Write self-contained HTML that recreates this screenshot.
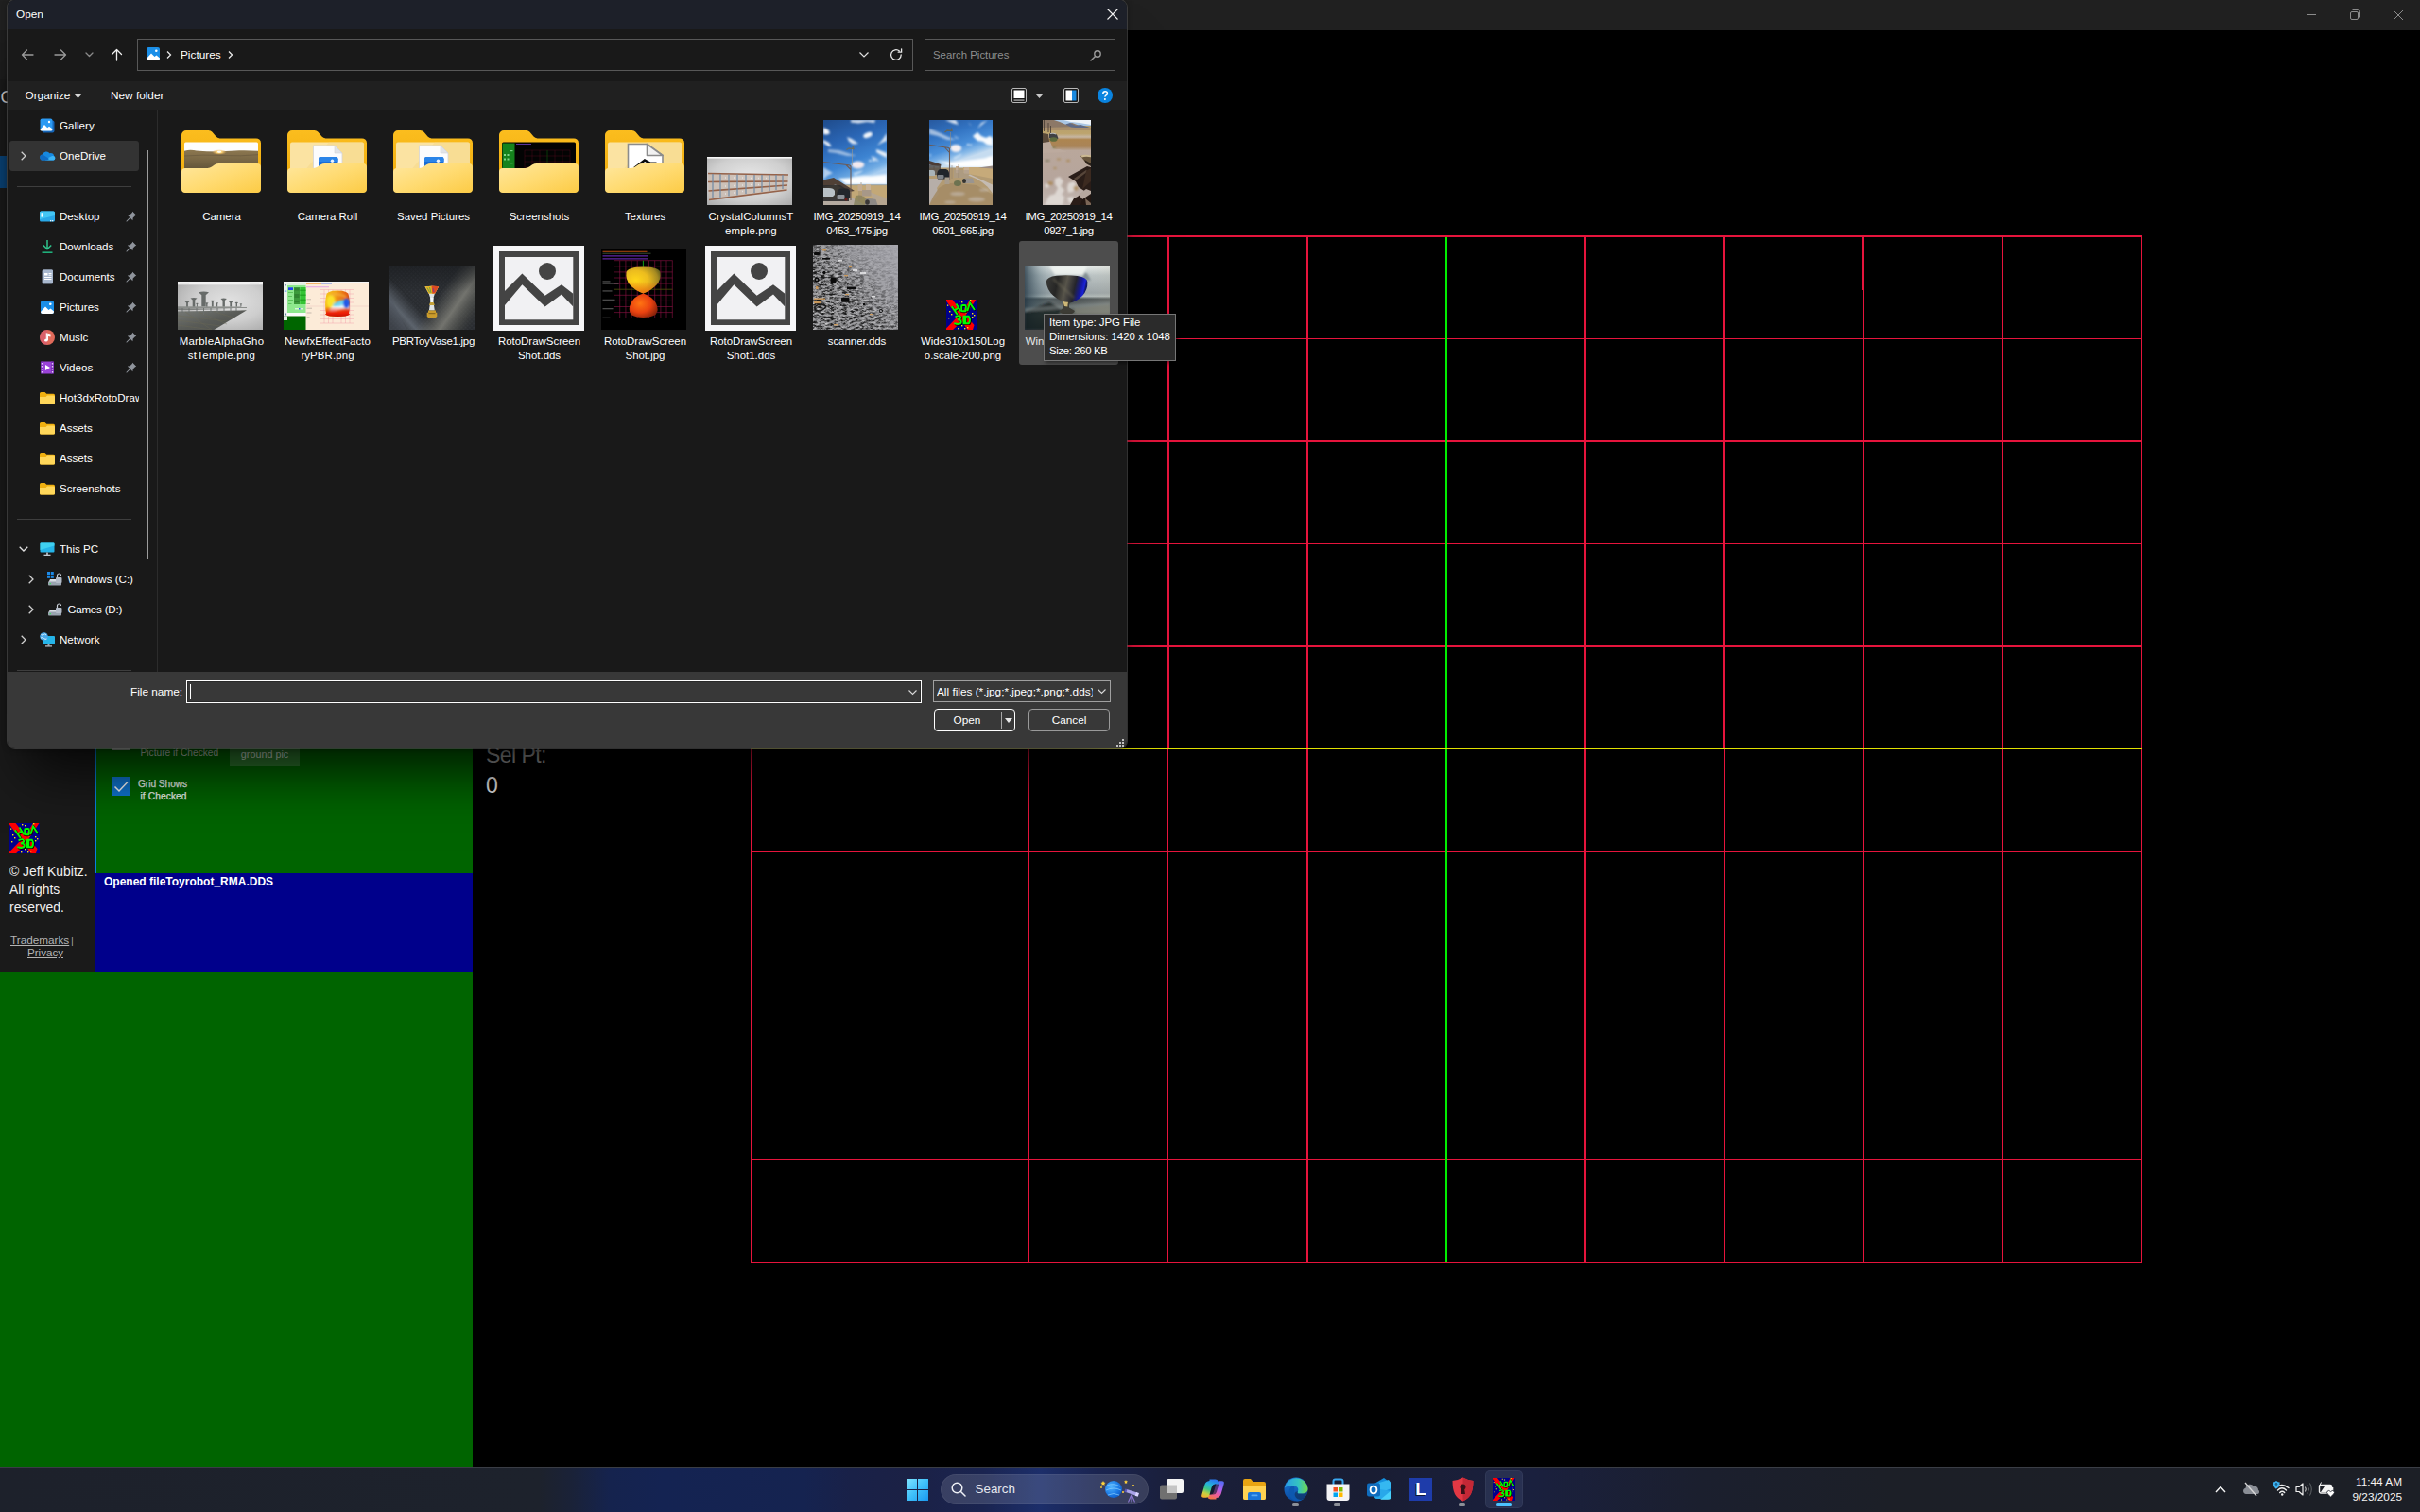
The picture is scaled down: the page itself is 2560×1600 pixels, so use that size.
<!DOCTYPE html>
<html lang="en">
<head>
<meta charset="utf-8">
<title>Open</title>
<style>
*{box-sizing:border-box;margin:0;padding:0}
html,body{width:2560px;height:1600px;overflow:hidden;background:#000;font-family:"Liberation Sans",sans-serif;color:#fff}
.a{position:absolute}
.t{position:absolute;white-space:nowrap;font-size:11.5px;line-height:16px;color:#fff}
svg{position:absolute;overflow:visible}
/* app layer */
#apptitle{left:0;top:0;width:2560px;height:32px;background:#202020}
#sidebar{left:0;top:32px;width:100px;height:997px;background:#1a1a1a}
#sidetop{left:0;top:32px;width:100px;height:52px;background:#1d1d1d}
#selnav{left:0;top:165px;width:7px;height:34px;background:#0a4377}
#green{left:100px;top:32px;width:400px;height:892px;background:#006400}
#greenline{left:100px;top:32px;width:2px;height:892px;background:#0a7fe0}
#bluebar{left:100px;top:924px;width:400px;height:105px;background:#00008b}
#green2{left:0;top:1029px;width:500px;height:523px;background:#006400}
/* dialog */
#dlg{left:8px;top:0;width:1184px;height:792px;background:#191919;border-radius:8px;box-shadow:0 0 0 1px rgba(90,90,90,.55),0 45px 56px -20px rgba(0,0,0,.76),0 1px 6px rgba(0,0,0,.35);overflow:hidden}
#dtitle{left:0;top:0;width:1184px;height:31px;background:#1d2029}
#dtool{left:0;top:86px;width:1184px;height:30px;background:#202020}
#dbottom{left:0;top:711px;width:1184px;height:81px;background:#383838}
.box{position:absolute;border:1px solid #585858;background:#191919}
.nav{position:absolute;white-space:nowrap;font-size:11.6px;line-height:16px;color:#fff;height:16px}
.dg{letter-spacing:-.4px}
.lbl{position:absolute;width:112px;text-align:center;font-size:11.45px;line-height:14.600px;color:#fff;white-space:nowrap}
/* taskbar */
#taskbar{left:0;top:1552px;width:2560px;height:48px;background:linear-gradient(90deg,#1d212b 0,#1d222c 570px,#1a2238 605px,#15234e 645px,#142352 700px,#152350 850px,#192148 900px,#1b2145 960px,#1a2450 1040px,#1c2e6a 1100px,#1a2450 1160px,#1a1f3a 1240px,#191d33 1450px,#1a203e 1620px,#1b1f2e 1800px,#1c1f27 2000px,#1c1f26 2560px);border-top:1px solid #3a3d45}
</style>
</head>
<body>
<!-- ================= APP LAYER ================= -->
<div class="a" id="apptitle"></div>
<svg style="left:2430px;top:0" width="130" height="32" viewBox="0 0 130 32" fill="none" stroke="#8b8b8b" stroke-width="1">
  <path d="M10 15.5h10"/>
  <rect x="56.500" y="12.500" width="8" height="8" rx="1.500"/><path d="M58.500 10.500h6q2 0 2 2v6"/>
  <path d="M102 11l10 10M112 11l-10 10"/>
</svg>
<div class="a" id="sidebar"></div>
<div class="a" id="sidetop"></div>
<div class="a" id="selnav"></div>
<div class="t" style="left:.5px;top:93.200px;font-size:18px;line-height:20px;color:#d0d0d0">C</div>
<div class="a" id="green"></div>
<div class="a" id="greenline"></div>
<div class="a" id="bluebar"></div>
<div class="a" id="green2"></div>

<!-- green panel controls partly visible under the dialog -->
<div class="a" style="left:118px;top:774px;width:20px;height:20px;border:2px solid #a8b8a8"></div>
<div class="t" style="left:148.500px;top:789px;font-size:10.2px;line-height:15px;color:#c4d0c4">Picture if Checked</div>
<div class="a" style="left:243px;top:782px;width:74px;height:29px;background:#2f7a2f"></div>
<div class="t" style="left:243px;top:791px;width:74px;text-align:center;font-size:10.8px;line-height:15px;color:#d6e2d6">ground pic</div>
<div class="a" style="left:118px;top:822px;width:20px;height:20px;background:#0f76d2"></div>
<svg style="left:118px;top:822px" width="20" height="20" viewBox="0 0 20 20" fill="none" stroke="#fff" stroke-width="1.500"><path d="M3.500 10.500l4.500 4.500l9-9.500"/></svg>
<div class="t" style="left:146px;top:822px;font-size:10.2px;line-height:15px;color:#eef4ee;-webkit-text-stroke:.25px #eef4ee;letter-spacing:-.05px">Grid Shows</div>
<div class="t" style="left:148.500px;top:835px;font-size:10.2px;line-height:15px;color:#eef4ee;-webkit-text-stroke:.25px #eef4ee;letter-spacing:.1px">if Checked</div>
<div class="t" style="left:110px;top:925px;font-size:12px;line-height:16px;font-weight:bold">Opened fileToyrobot_RMA.DDS</div>

<!-- sidebar bottom -->
<svg style="left:10px;top:871px" width="32" height="32" viewBox="0 0 32 32"><use href="#hot3d"/></svg>
<div class="t" style="left:10px;top:913px;font-size:13.9px;line-height:19px;color:#f0f0f0;white-space:normal;width:92px">© Jeff Kubitz. All rights reserved.</div>
<div class="t" style="left:11px;top:988px;font-size:11.75px;line-height:13px;color:#b4b4b4"><span style="text-decoration:underline">Trademarks</span><span style="font-size:9px;padding-left:2px">|</span></div>
<div class="t" style="left:29px;top:1001px;font-size:11.6px;line-height:13px;color:#b4b4b4;text-decoration:underline">Privacy</div>

<!-- Sel Pt -->
<div class="t" style="left:514px;top:784px;font-size:23px;line-height:30px;color:#9a9a9a;letter-spacing:-.55px">Sel Pt:</div>
<div class="t" style="left:514px;top:816px;font-size:23px;line-height:30px;color:#e6e6e6">0</div>

<!-- GRID -->
<svg id="grid" style="left:0;top:0" width="2560" height="1600" viewBox="0 0 2560 1600" fill="none" shape-rendering="crispEdges">
  <g stroke="#e6143c" stroke-width="1">
    <path d="M794.500 792v543.500M941.500 792v543.500M1088.500 792v543.500M1235.500 792v543.500M1971.500 306v1029.500M2118.500 250v1085.500M2265.500 250v1085.500M1824.500 792v543.500"/>
    <path d="M794 358.500h1472M794 575.500h1472M794 1009.500h1472M794 1118.500h1472M794 1226.500h1472M794 1335.500h1472"/>
  </g>
  <g stroke="#e6143c" stroke-width="2">
    <path d="M1236 250v542M1383 250v1085M1677 250v1085M1824 250v542M1971 250v57"/>
    <path d="M794 250h1472M794 467h1472M794 684h1472M794 901h1472"/>
  </g>
  <path d="M1530 251v1084" stroke="#00ee00" stroke-width="2"/>
  <path d="M794 792.500h1472" stroke="#e0e000" stroke-width="1"/>
</svg>

<!-- ================= DIALOG ================= -->
<div class="a" id="dlg">
  <div class="a" id="dtitle"></div>
  <div class="a" id="dtool"></div>
  <div class="a" id="dbottom"></div>
</div>
<!-- title -->
<div class="t" style="left:17px;top:7px;font-size:11.8px;line-height:16px">Open</div>
<svg style="left:1171px;top:9px" width="12" height="12" viewBox="0 0 12 12" fill="none" stroke="#f2f2f2" stroke-width="1.100"><path d="M.5.5l11 11M11.500.5l-11 11"/></svg>
<!-- nav arrows -->
<svg style="left:20px;top:49px" width="120" height="18" viewBox="0 0 120 18" fill="none" stroke-width="1.300" stroke-linecap="round" stroke-linejoin="round">
  <path d="M15 9H3.500M8.500 4L3.500 9l5 5" stroke="#9a9a9a"/>
  <path d="M38 9h11.500M44.500 4l5 5-5 5" stroke="#9a9a9a"/>
  <path d="M71 7l3.500 3.500L78 7" stroke="#8a8a8a"/>
  <path d="M103.500 15V3.500M98.500 8.500l5-5 5 5" stroke="#f0f0f0"/>
</svg>
<!-- address box -->
<div class="box" style="left:145px;top:41px;width:821px;height:34px"></div>
<svg style="left:155px;top:50px" width="14" height="14" viewBox="0 0 14 14"><use href="#picico"/></svg>
<svg style="left:176px;top:54px" width="6" height="8" viewBox="0 0 6 8" fill="none" stroke="#e8e8e8" stroke-width="1.300"><path d="M1 .5L4.500 4 1 7.500"/></svg>
<div class="t" style="left:191px;top:50px;font-size:11.8px;line-height:16px">Pictures</div>
<svg style="left:241px;top:54px" width="6" height="8" viewBox="0 0 6 8" fill="none" stroke="#e8e8e8" stroke-width="1.300"><path d="M1 .5L4.500 4 1 7.500"/></svg>
<svg style="left:909px;top:55px" width="10" height="6" viewBox="0 0 10 6" fill="none" stroke="#e0e0e0" stroke-width="1.200"><path d="M.5.5L5 5 9.500.5"/></svg>
<svg style="left:941px;top:51px" width="14" height="14" viewBox="0 0 14 14" fill="none" stroke="#e8e8e8" stroke-width="1.300" stroke-linecap="round"><path d="M12.200 7a5.300 5.300 0 1 1-1.800-4"/><path d="M12.600 .8v3.400H9.200"/></svg>
<!-- search box -->
<div class="box" style="left:978px;top:41px;width:202px;height:34px"></div>
<div class="t" style="left:987px;top:50px;font-size:11.4px;line-height:16px;color:#8e8e8e">Search Pictures</div>
<svg style="left:1153px;top:52px" width="13" height="13" viewBox="0 0 13 13" fill="none" stroke="#9a9a9a" stroke-width="1.400" stroke-linecap="round"><circle cx="8" cy="5" r="3.200"/><path d="M5.600 7.400L1 12"/></svg>
<!-- toolbar -->
<div class="t" style="left:26.500px;top:93px;font-size:11.8px;line-height:16px">Organize</div>
<svg style="left:78px;top:99px" width="9" height="5" viewBox="0 0 9 5"><path d="M0 0h9L4.500 5z" fill="#d8d8d8"/></svg>
<div class="t" style="left:117px;top:93px;font-size:11.8px;line-height:16px">New folder</div>
<svg style="left:1070px;top:93px" width="16" height="16" viewBox="0 0 16 16"><rect x=".5" y=".5" width="15" height="15" rx="1.500" fill="#1a1a1a" stroke="#b8b8b8"/><rect x="2.500" y="2.500" width="11" height="8.500" fill="#fff"/><rect x="2.500" y="12.500" width="11" height="1.200" fill="#b8b8b8"/></svg>
<svg style="left:1095px;top:99px" width="9" height="5" viewBox="0 0 9 5"><path d="M0 0h9L4.500 5z" fill="#c8c8c8"/></svg>
<svg style="left:1125px;top:93px" width="16" height="16" viewBox="0 0 16 16"><rect x=".5" y=".5" width="15" height="15" rx="1.500" fill="#1a1a1a" stroke="#b8b8b8"/><rect x="2.500" y="2.500" width="6.500" height="11" fill="#fff"/><rect x="9" y="2.500" width="4.500" height="11" fill="#1a8ae0"/></svg>
<svg style="left:1161px;top:93px" width="16" height="16" viewBox="0 0 16 16"><circle cx="8" cy="8" r="8" fill="#0a84e0"/><path d="M5.800 6.200q0-2.400 2.300-2.400t2.300 2.100q0 1.300-1.300 2t-1.100 1.800" fill="none" stroke="#fff" stroke-width="1.500"/><circle cx="7.900" cy="12" r="1" fill="#fff"/></svg>
<!-- bottom panel -->
<div class="t" style="left:138px;top:724px;font-size:11.8px;line-height:16px">File name:</div>
<div class="a" style="left:197px;top:720px;width:778px;height:24px;border:1px solid #fff;background:#383838;box-shadow:inset 0 0 0 1px #2a2a2a"></div>
<div class="a" style="left:201px;top:724px;width:1px;height:16px;background:#fff"></div>
<svg style="left:961px;top:730px" width="9" height="5" viewBox="0 0 9 5" fill="none" stroke="#d8d8d8" stroke-width="1.100"><path d="M.5.5l4 4 4-4"/></svg>
<div class="a" style="left:987px;top:720px;width:188px;height:23px;border:1px solid #a0a0a0;background:#383838"></div>
<div class="t" style="left:991px;top:723.500px;font-size:11.8px;line-height:16px;width:165px;overflow:hidden">All files (*.jpg;*.jpeg;*.png;*.dds)</div>
<svg style="left:1161px;top:729px" width="9" height="5" viewBox="0 0 9 5" fill="none" stroke="#d8d8d8" stroke-width="1.100"><path d="M.5.5l4 4 4-4"/></svg>
<div class="a" style="left:988px;top:750px;width:86px;height:24px;border:1.500px solid #fff;border-radius:4px;background:#383838"></div>
<div class="t" style="left:988px;top:754px;width:70px;text-align:center;font-size:11.8px;line-height:16px">Open</div>
<div class="a" style="left:1059px;top:753px;width:1px;height:18px;background:#a8a8a8"></div>
<svg style="left:1063px;top:760px" width="8" height="5" viewBox="0 0 8 5"><path d="M0 0h8L4 5z" fill="#e8e8e8"/></svg>
<div class="a" style="left:1088px;top:750px;width:86px;height:24px;border:1px solid #9a9a9a;border-radius:4px;background:#383838"></div>
<div class="t" style="left:1088px;top:754px;width:86px;text-align:center;font-size:11.8px;line-height:16px">Cancel</div>
<svg style="left:1181px;top:782px" width="9" height="9" viewBox="0 0 9 9" fill="#c0c0c0"><rect x="6" y="0" width="2" height="2"/><rect x="3" y="3" width="2" height="2"/><rect x="6" y="3" width="2" height="2"/><rect x="0" y="6" width="2" height="2"/><rect x="3" y="6" width="2" height="2"/><rect x="6" y="6" width="2" height="2"/></svg>

<!-- nav pane -->
<div class="a" style="left:166px;top:116px;width:1px;height:595px;background:#2c2c2c"></div>
<div class="a" style="left:10px;top:149px;width:137px;height:32px;background:#333333;border-radius:3px"></div>
<div class="a" style="left:18px;top:197px;width:121px;height:1px;background:#3e3e3e"></div>
<div class="a" style="left:18px;top:549px;width:121px;height:1px;background:#3e3e3e"></div>
<div class="a" style="left:18px;top:709px;width:121px;height:1px;background:#3e3e3e"></div>
<div class="a" style="left:155px;top:159px;width:2px;height:433px;background:#9c9c9c"></div>
<svg style="left:42px;top:125px" width="16" height="16" viewBox="0 0 16 16"><use href="#i-gallery"/></svg>
<div class="nav" style="left:63.0px;top:125px">Gallery</div>
<svg style="left:42px;top:157px" width="16" height="16" viewBox="0 0 16 16"><use href="#i-onedrive"/></svg>
<div class="nav" style="left:63.0px;top:157px">OneDrive</div>
<svg style="left:42px;top:221px" width="16" height="16" viewBox="0 0 16 16"><use href="#i-desktop"/></svg>
<div class="nav" style="left:63.0px;top:221px">Desktop</div>
<svg style="left:133px;top:223px" width="12" height="12" viewBox="0 0 12 12"><use href="#i-pin"/></svg>
<svg style="left:42px;top:253px" width="16" height="16" viewBox="0 0 16 16"><use href="#i-downloads"/></svg>
<div class="nav" style="left:63.0px;top:253px">Downloads</div>
<svg style="left:133px;top:255px" width="12" height="12" viewBox="0 0 12 12"><use href="#i-pin"/></svg>
<svg style="left:42px;top:285px" width="16" height="16" viewBox="0 0 16 16"><use href="#i-documents"/></svg>
<div class="nav" style="left:63.0px;top:285px">Documents</div>
<svg style="left:133px;top:287px" width="12" height="12" viewBox="0 0 12 12"><use href="#i-pin"/></svg>
<svg style="left:42px;top:317px" width="16" height="16" viewBox="0 0 16 16"><use href="#i-pictures"/></svg>
<div class="nav" style="left:63.0px;top:317px">Pictures</div>
<svg style="left:133px;top:319px" width="12" height="12" viewBox="0 0 12 12"><use href="#i-pin"/></svg>
<svg style="left:42px;top:349px" width="16" height="16" viewBox="0 0 16 16"><use href="#i-music"/></svg>
<div class="nav" style="left:63.0px;top:349px">Music</div>
<svg style="left:133px;top:351px" width="12" height="12" viewBox="0 0 12 12"><use href="#i-pin"/></svg>
<svg style="left:42px;top:381px" width="16" height="16" viewBox="0 0 16 16"><use href="#i-videos"/></svg>
<div class="nav" style="left:63.0px;top:381px">Videos</div>
<svg style="left:133px;top:383px" width="12" height="12" viewBox="0 0 12 12"><use href="#i-pin"/></svg>
<svg style="left:42px;top:413px" width="16" height="16" viewBox="0 0 16 16"><use href="#i-sfolder"/></svg>
<div class="nav" style="left:63.0px;top:413px;width:84px;overflow:hidden">Hot3dxRotoDraw</div>
<svg style="left:42px;top:445px" width="16" height="16" viewBox="0 0 16 16"><use href="#i-sfolder"/></svg>
<div class="nav" style="left:63.0px;top:445px">Assets</div>
<svg style="left:42px;top:477px" width="16" height="16" viewBox="0 0 16 16"><use href="#i-sfolder"/></svg>
<div class="nav" style="left:63.0px;top:477px">Assets</div>
<svg style="left:42px;top:509px" width="16" height="16" viewBox="0 0 16 16"><use href="#i-sfolder"/></svg>
<div class="nav" style="left:63.0px;top:509px">Screenshots</div>
<svg style="left:42px;top:573px" width="16" height="16" viewBox="0 0 16 16"><use href="#i-thispc"/></svg>
<div class="nav" style="left:63.0px;top:573px">This PC</div>
<svg style="left:50px;top:605px" width="16" height="16" viewBox="0 0 16 16"><use href="#i-drivec"/></svg>
<div class="nav" style="left:71.4px;top:605px">Windows (C:)</div>
<svg style="left:50px;top:637px" width="16" height="16" viewBox="0 0 16 16"><use href="#i-drived"/></svg>
<div class="nav" style="left:71.4px;top:637px;letter-spacing:-.22px">Games (D:)</div>
<svg style="left:42px;top:669px" width="16" height="16" viewBox="0 0 16 16"><use href="#i-network"/></svg>
<div class="nav" style="left:63.0px;top:669px">Network</div>
<svg style="left:21.5px;top:160px" width="6" height="10" viewBox="0 0 6 10" fill="none" stroke="#d0d0d0" stroke-width="1.300"><path d="M.7.7L5 5 .7 9.300"/></svg>
<svg style="left:19.5px;top:578px" width="10" height="6" viewBox="0 0 10 6" fill="none" stroke="#e0e0e0" stroke-width="1.300"><path d="M.7.7L5 5 9.300.7"/></svg>
<svg style="left:29.5px;top:608px" width="6" height="10" viewBox="0 0 6 10" fill="none" stroke="#d0d0d0" stroke-width="1.300"><path d="M.7.7L5 5 .7 9.300"/></svg>
<svg style="left:29.5px;top:640px" width="6" height="10" viewBox="0 0 6 10" fill="none" stroke="#d0d0d0" stroke-width="1.300"><path d="M.7.7L5 5 .7 9.300"/></svg>
<svg style="left:21.5px;top:672px" width="6" height="10" viewBox="0 0 6 10" fill="none" stroke="#d0d0d0" stroke-width="1.300"><path d="M.7.7L5 5 .7 9.300"/></svg>

<!-- ===== file items row 1 ===== -->
<!-- Camera -->
<svg style="left:192px;top:138px" width="84" height="66" viewBox="0 0 84 66">
  <use href="#fback"/>
  <defs><linearGradient id="cml" x1="0" y1="0" x2="0" y2="1"><stop offset="0" stop-color="#8d7850"/><stop offset=".5" stop-color="#7a6846"/><stop offset="1" stop-color="#64563a"/></linearGradient><radialGradient id="cms"><stop offset="0" stop-color="#fffbe6"/><stop offset=".35" stop-color="#ffd77a"/><stop offset="1" stop-color="#e2a24a" stop-opacity="0"/></radialGradient></defs>
  <rect x="3" y="12.500" width="78" height="28" rx="1.500" fill="#fdfdfd"/>
  <path d="M3 21.800q5-1.800 10-.8t14 1.200l14 .3q12-.8 20-1.200t20 .5V40.500H3z" fill="url(#cml)"/>
  <ellipse cx="40" cy="23" rx="8" ry="2.800" fill="url(#cms)"/><ellipse cx="40" cy="22.600" rx="2.200" ry="1.100" fill="#fffdf0"/>
  <path d="M3 27q20-1.500 40-.5t38-.8" stroke="#5e5038" stroke-width=".8" fill="none" opacity=".6"/>
  <use href="#ffront"/>
</svg>
<div class="lbl" style="left:178.500px;top:222.200px">Camera</div>
<!-- Camera Roll -->
<svg style="left:304px;top:138px" width="84" height="66" viewBox="0 0 84 66">
  <use href="#fback"/><use href="#fpaper"/><use href="#fdocpic"/><use href="#ffront"/>
</svg>
<div class="lbl" style="left:290.500px;top:222.200px">Camera Roll</div>
<!-- Saved Pictures -->
<svg style="left:416px;top:138px" width="84" height="66" viewBox="0 0 84 66">
  <use href="#fback"/><use href="#fpaper"/><use href="#fdocpic"/><use href="#ffront"/>
</svg>
<div class="lbl" style="left:402.500px;top:222.200px">Saved Pictures</div>
<!-- Screenshots -->
<svg style="left:528px;top:138px" width="84" height="66" viewBox="0 0 84 66">
  <use href="#fback"/>
  <rect x="3" y="12.500" width="78" height="28" rx="1.500" fill="#030303"/>
  <rect x="3.500" y="13.500" width="13" height="27" fill="#15831d"/>
  <g fill="#7fd887"><rect x="5" y="25" width="2" height="2"/><rect x="8.500" y="25" width="2" height="2"/><rect x="5" y="29.500" width="2" height="2"/><rect x="8.500" y="29.500" width="2" height="2"/><rect x="12" y="21" width="2.500" height="1.200"/><rect x="12" y="34" width="2.500" height="1.200"/></g>
  <path d="M18 14.500h16" stroke="#7040c0" stroke-width="1" opacity=".8"/>
  <g stroke="#4a0818" stroke-width=".5"><path d="M27 21h48M27 27h48M27 33h48M27 39h48M27 21v19M35 21v19M43 21v19M59 21v19M67 21v19M75 21v19"/></g><path d="M51 21v19" stroke="#0a5a0a" stroke-width=".6"/>
  <use href="#ffront"/>
</svg>
<div class="lbl" style="left:514.500px;top:222.200px">Screenshots</div>
<!-- Textures -->
<svg style="left:640px;top:138px" width="84" height="66" viewBox="0 0 84 66">
  <use href="#fback"/><use href="#fpaper"/>
  <path d="M24.500 14.500h20l16.500 12V42h-36.500z" fill="#fff" stroke="#8c8c8c" stroke-width="1.600"/>
  <path d="M44.500 14.500v12h16.500z" fill="#f2f2f2" stroke="#8c8c8c" stroke-width="1.600" stroke-linejoin="round"/>
  <path d="M31 40l11-8.500 5.500 3.200h7" fill="none" stroke="#0a0a0a" stroke-width="2.600"/>
  <use href="#ffront"/>
</svg>
<div class="lbl" style="left:626.500px;top:222.200px">Textures</div>
<!-- CrystalColumnsTemple.png -->
<svg style="left:748px;top:166px" width="90" height="51" viewBox="0 0 90 51">
  <defs><radialGradient id="ccg" cx=".5" cy=".45" r=".75"><stop offset="0" stop-color="#e9e9e9"/><stop offset=".6" stop-color="#cfcfcf"/><stop offset="1" stop-color="#aaaaaa"/></radialGradient></defs>
  <rect width="90" height="51" fill="url(#ccg)"/><rect width="90" height="1.600" fill="#f6f6f6"/>
  <path d="M1 17l85 1.500-1 17L2 46z" fill="#c9b9ae" opacity=".75"/>
  <g stroke="#94624a" stroke-width="1.700" fill="none"><path d="M1 17.500l85 1.500M1 26.500l84.500-.5M1.500 36l83.500-6M2 45.500l82.500-10.500"/></g>
  <g stroke="#6f8aa6" stroke-width="1.200"><path d="M6 18v26M14 18v25M23 18.500v23M32 18.500v22M41 19v20M50 19v19M58 19v18M66 19v17M73 19v16M80 19v15"/></g>
  <g stroke="#e8e8ea" stroke-width="1.600" opacity=".8"><path d="M10 22h1M19 22h1M28 22h1M37 22h1M46 22.500h1M54 22.500h1M62 22.500h1M10 31h1M19 31h1M28 30.500h1M37 30h1M46 29.500h1M54 29.500h1M10 40h1M19 39h1M28 38h1M37 36.500h1"/></g>
</svg>
<div class="lbl" style="left:738.500px;top:222.200px;letter-spacing:.15px">CrystalColumnsT<br>emple.png</div>
<!-- IMG_20250919_140453_475.jpg -->
<svg style="left:871px;top:127px;overflow:hidden" width="67" height="90" viewBox="0 0 67 90">
  <defs><linearGradient id="sky1" x1="0" y1="0" x2=".3" y2="1"><stop offset="0" stop-color="#1f4c8c"/><stop offset=".3" stop-color="#2a65b4"/><stop offset=".58" stop-color="#3d84d2"/><stop offset=".74" stop-color="#73ade4"/><stop offset=".8" stop-color="#a8cdf0"/></linearGradient></defs>
  <rect width="67" height="90" fill="url(#sky1)"/>
  <g filter="url(#bl1)" fill="#fff">
    <path d="M29 0h26l-1 3-8-1-9 1.500-8-1z" opacity=".8"/><path d="M52 1l3 7-2-5z" opacity=".6"/>
    <path d="M0 8l5 2 2 4-3 1.500L0 15z" opacity=".95"/><path d="M0 21l6 3 2.500 4-3 0L0 24z" opacity=".9"/>
    <path d="M25 18l5 2 7 5-6 .5-4-3z" opacity=".85"/><ellipse cx="47" cy="16" rx="5" ry="2.600" transform="rotate(-22 47 16)" opacity=".92"/>
    <path d="M67 14l-4 6-6 7 5-3 5-2z" opacity=".8"/><path d="M5 31l12 1 12 4 6 2-10 0-12-3-8-1z" opacity=".5"/>
    <path d="M56 31l6 2 5 2v5l-6-3-5-3z" opacity=".85"/><path d="M51 38l5 2 3 4-4-1-4-3z" opacity=".6"/>
    <rect x="48.500" y="42" width="2" height="2" opacity=".9"/><rect x="52" y="41.500" width="2.200" height="2" opacity=".9"/>
    <ellipse cx="36.500" cy="47.500" rx="6.800" ry="4" fill="#f3e9ee"/><path d="M31 56l11-3-2 2.500-7 3.500z" opacity=".55"/><path d="M0 50l5 3 5 3-6 3-4 4z" opacity=".6"/>
    <path d="M16 62l20-1 31-2v9H24z" opacity=".97"/><path d="M30 60q10-2.500 20-1l17-2v5H30z" opacity=".7"/>
  </g>
  <rect y="68.500" width="67" height="21.500" fill="#c3a877"/><rect y="68" width="67" height="1.200" fill="#8aa0b8" opacity=".6"/>
  <path d="M49 76l18 7v7H56z" fill="#b6a690"/><path d="M0 82h30l14 8H0z" fill="#b4aaa0"/><path d="M34 80q8-2 12 4l4 6H32z" fill="#7d7a52" opacity=".7"/>
  <path d="M0 63.500l11-2.500 22 14-6 1-14-7.500L0 71z" fill="#4f4036"/><path d="M0 69h18l9 6v11H0z" fill="#2f2e2e" opacity=".92"/>
  <path d="M0 72h6q5 0 6 3v4l-2 2H0z" fill="#b9c1c6"/><path d="M14 80q0-6 4-7.500h7q3 .5 3.500 4.500v5.500l-3 1H15z" fill="#23262b"/><rect x="14.500" y="79" width="8" height="5" rx="1" fill="#8d9197"/><circle cx="24" cy="84" r="1.500" fill="#6a1c18"/>
  <path d="M29 48.500V85M0 44.500l27 3.200q2 .3 2 2M24 47.500l5 5" stroke="#6e5c56" stroke-width="1.100" fill="none"/><path d="M30.500 31v17" stroke="#9a9890" stroke-width=".6"/><path d="M24.500 31.500l2.500-1.500 5 .5-1-2.500" stroke="#6b6d60" stroke-width="1.300" fill="none"/>
  <path d="M38 74v12M40 66v18" stroke="#8c7c6c" stroke-width=".6"/><rect x="36.500" y="68" width="4.500" height="7" fill="#c2ab92"/><rect x="45" y="68" width="5" height="6" fill="#c8b298"/><rect x="41" y="74" width="9.500" height="6.500" fill="#a4968a" opacity=".9"/>
  <path d="M44 86q0-3 3.500-3t8 1l2 6H44z" fill="#8e8a86"/><ellipse cx="46.500" cy="87" rx="2.300" ry="2.800" fill="#3a3836"/>
</svg>
<div class="lbl dg" style="left:850.500px;top:222.200px">IMG_20250919_14<br>0453_475.jpg</div>
<!-- IMG_20250919_140501_665.jpg -->
<svg style="left:983px;top:127px;overflow:hidden" width="67" height="90" viewBox="0 0 67 90">
  <defs><linearGradient id="sky2" x1="0" y1="0" x2=".25" y2="1"><stop offset="0" stop-color="#27599f"/><stop offset=".22" stop-color="#3273c2"/><stop offset=".4" stop-color="#4a90da"/><stop offset=".5" stop-color="#8cbce9"/><stop offset=".56" stop-color="#c6dcf0"/></linearGradient></defs>
  <rect width="67" height="90" fill="url(#sky2)"/>
  <g filter="url(#bl1)" fill="#fff">
    <path d="M17 0h11l3 5-6-1.500z" opacity=".8"/><path d="M62 0l-11 9 4-6z" opacity=".75"/><path d="M41 2l4 4-2-1z" opacity=".5"/>
    <path d="M0 9l10 4 10 5 8 3-9 0-10-4-9-2z" opacity=".55"/><path d="M26 16l6 4-4-.5z" opacity=".5"/>
    <path d="M46 17l5-4 4 4 5 2 4-2 3 2v8l-6-1-4-3-6-1z" opacity=".95"/><rect x="40" y="25" width="2" height="1.800" opacity=".85"/><rect x="43" y="25.500" width="1.800" height="1.600" opacity=".8"/>
    <ellipse cx="28.200" cy="30" rx="6" ry="4" fill="#f4f0f2"/><path d="M25 40l10-5-2 3-6 3.500z" opacity=".5"/><path d="M0 36l3 1-3 2z" opacity=".5"/>
    <path d="M8 43l14 2 20-2.500 16-2 9-2.500v12H28z" opacity=".96"/><path d="M62 39l5-.5v4l-5-1z"/>
  </g>
  <rect y="50.500" width="67" height="39.500" fill="#b39b73"/><path d="M36 50h31v12l-20-4-11-2z" fill="#c6aa7a"/><path d="M52 50.500l15-2v3z" fill="#9b8c84"/>
  <path d="M43 57.500l24 11v9q-8-13-26-19z" fill="#c4bbb2"/>
  <path d="M0 62h15l-7 10 2 6-10 12z" fill="#b6aea8"/><path d="M10 72q8-6 20-5l20 2 17 10v11H0q4-10 10-18z" fill="#a48c66" opacity=".9"/>
  <g filter="url(#bl1)" fill="#c9c1ba" opacity=".55"><ellipse cx="30" cy="78" rx="8" ry="2"/><ellipse cx="50" cy="84" rx="9" ry="2.500"/><ellipse cx="22" cy="87" rx="6" ry="1.500"/><ellipse cx="58" cy="74" rx="5" ry="1.500"/></g>
  <path d="M0 43l12.500 4-.5 2.500L0 47.500z" fill="#4c3c36"/><path d="M0 48h12v10H0z" fill="#55504c" opacity=".85"/><path d="M5 49v9M11 49v9" stroke="#5e4e46" stroke-width=".8"/>
  <path d="M0 53h4q2 0 2 2v4H0z" fill="#a9b3b8"/><path d="M8 59q0-6 3.500-7h6q3 .5 3.500 4v5.500l-4 1H9z" fill="#20242a"/><rect x="8.500" y="58" width="7" height="4" rx="1" fill="#7e8288"/>
  <path d="M21.500 29.500V64M0 26.200l19.500 3q2 .3 2 2M16.500 29l5 5.500" stroke="#6b5a55" stroke-width="1.100" fill="none"/><path d="M22.500 13v17" stroke="#8e8c84" stroke-width=".6"/><path d="M16.500 13l2.500-2 5 .5-.5-3" stroke="#63655a" stroke-width="1.300" fill="none"/>
  <rect x="28" y="49" width="3.500" height="7" fill="#c3aa90"/><rect x="37" y="50" width="5" height="6.500" fill="#c7b096"/><rect x="26" y="53" width="16" height="8" fill="#a89a8c" opacity=".55"/><path d="M24 48v14M31 47v14" stroke="#8c7c6c" stroke-width=".5"/>
  <rect x="16.500" y="60.500" width="5" height="7.500" fill="#a89c8c"/><ellipse cx="30" cy="67" rx="4" ry="3" fill="#6d7250"/><path d="M35 64q0-2.500 4-2.500h7l1.500 5.500H36z" fill="#9a9590"/><ellipse cx="37" cy="64.500" rx="2" ry="2.600" fill="#35332f"/>
</svg>
<div class="lbl dg" style="left:962.500px;top:222.200px">IMG_20250919_14<br>0501_665.jpg</div>
<!-- IMG_20250919_140927_1.jpg -->
<svg style="left:1103px;top:127px;overflow:hidden" width="51" height="90" viewBox="0 0 51 90">
  <defs><linearGradient id="gr3" x1="0" y1="0" x2="0" y2="1"><stop offset="0" stop-color="#b19a6a"/><stop offset=".16" stop-color="#bda46e"/><stop offset=".2" stop-color="#c6b6a4"/><stop offset=".23" stop-color="#ad8550"/><stop offset=".31" stop-color="#a98458"/><stop offset=".36" stop-color="#b9a79b"/><stop offset=".7" stop-color="#b6a59c"/><stop offset="1" stop-color="#c3b8b2"/></linearGradient></defs>
  <rect width="51" height="90" fill="url(#gr3)"/>
  <path d="M0 22l8 1 3 7 14 4H0z" fill="#bba99c"/><path d="M0 31h18l8 3-26 1z" fill="#bcaa9e"/>
  <rect x="12" width="39" height="6" fill="#a9c6e4"/><path d="M22 0h29v5l-12-2-9-1z" fill="#eef3f8"/>
  <path d="M0 0h12l6 2 7 3 6-2 8 3 12 2.500V9L30 7.500 0 8z" fill="#8c7867"/><path d="M24 4.500l5-1.500 6 3 5-1 11 3.200v1.300L30 7.600z" fill="#5f6a86"/>
  <path d="M0 8h51v3H0z" fill="#a98f6c"/>
  <path d="M1.500 0v12M3.500 0v11M6 3v10M8.500 6v9" stroke="#4e4238" stroke-width=".9"/>
  <path d="M0 14l6 1 1 8-7 1z" fill="#5a4a3a"/><path d="M7 14.500q4-1.500 8 1l1.500 4-3 1.500-6.500-2z" fill="#3e4044"/><path d="M8 14.500q3-1 6 .5" stroke="#c8ccd0" stroke-width=".9" fill="none"/><ellipse cx="11.500" cy="20.500" rx="4" ry="2.300" fill="#5d6b3e"/>
  <g filter="url(#bl1)"><g fill="#e2dcd8" opacity=".9"><path d="M13 62l5-2 4 5-3 5 4 4-4 7-6-3 3-6-3-4z"/><path d="M27 67l6-2 3 5-4 6-5 1-1-5z"/><path d="M2 68l4-1 1 4-4 1z"/><path d="M7 80l10-3 6 4-2 9H2z"/><path d="M26 82l6-1 2 5-6 2z"/></g>
  <g fill="#a8844e" opacity=".75"><ellipse cx="17" cy="41.500" rx="2.200" ry="1"/><ellipse cx="27" cy="43" rx="2.200" ry="1.200"/><ellipse cx="13" cy="51" rx="2" ry="1"/><ellipse cx="8" cy="67" rx="3" ry="2"/><ellipse cx="35" cy="72" rx="2.500" ry="2.500"/></g>
  <ellipse cx="5" cy="43" rx="3" ry="1" fill="#6d6f50" opacity=".7"/><ellipse cx="12" cy="29" rx="2" ry=".8" fill="#5f7040" opacity=".8"/></g>
  <path d="M27 60l20-11 4 1v40H29l4-7 4-2 7-6-6-4-3-6z" fill="#2a1d18"/><path d="M33 62l13-9 1.500 1.500L35 64z" fill="#57463a"/><path d="M46 54l5-3v14l-9 8z" fill="#3c2a20"/><path d="M38 79l8-6 5 2v6l-7 5z" fill="#b6a79e"/><path d="M42 84l9-6v12H40z" fill="#231712"/><path d="M45 83l6 5v2h-5z" fill="#7b6656"/>
  <path d="M40 38q3-1.500 11 0v10l-4-1z" fill="#67543c"/><path d="M40.500 37.500q3-1.200 10.500-.3v2q-6-.8-9.500.3z" fill="#cbb892"/><path d="M44 42l7 4v3l-5-3z" fill="#2e241c"/>
</svg>
<div class="lbl dg" style="left:1074.500px;top:222.200px">IMG_20250919_14<br>0927_1.jpg</div>

<!-- ===== file items row 2 ===== -->
<div class="a" style="left:1078px;top:255px;width:105px;height:131px;background:#4d4d4d;border-radius:3px"></div>
<!-- MarbleAlphaGhostTemple.png -->
<svg style="left:188px;top:298px;overflow:hidden" width="90" height="51" viewBox="0 0 90 51">
  <defs><radialGradient id="mg" cx=".6" cy=".42" r=".8"><stop offset="0" stop-color="#e2e2e2"/><stop offset=".5" stop-color="#cecece"/><stop offset="1" stop-color="#a4a4a4"/></radialGradient>
  <linearGradient id="mfl" x1="0" y1="0" x2="1" y2="1"><stop offset="0" stop-color="#777a76"/><stop offset=".5" stop-color="#595b57"/><stop offset="1" stop-color="#4c4e4b"/></linearGradient></defs>
  <rect width="90" height="51" fill="url(#mg)"/><rect width="90" height="3.300" fill="#f1f1f1"/><path d="M2 1.700h10M76 1.700h10" stroke="#b8b8b8" stroke-width=".7"/>
  <path d="M0 31.500l73-1.200L38.500 51H0z" fill="url(#mfl)"/>
  <g stroke="#6d6a55" stroke-width=".7" opacity=".55"><path d="M0 36l52 6M0 41l45 6M0 46l36 5M8 32l28 19M22 32l30 13M38 31.500l22 7"/></g>
  <path d="M0 26.200l73 .3v1.600L0 28.300z" fill="#8b8e8b"/><path d="M0 28.300l60 .4L8 30.200 0 30z" fill="#6b6e6b" opacity=".8"/>
  <g stroke="#6a6e6b" stroke-width=".9"><path d="M5 28v5M12 28v5M20 28v6M27.500 28v7M35 28v5M42 28v5M49 28v4.500M56 28v4M62 28v3"/></g>
  <g fill="#676b69"><path d="M22 11.200q5.500-1.200 11 0l-3.300 3v12h-4.400v-12z"/><path d="M13.500 17.500q3.500-.8 7 0l-2.200 2v7h-2.600v-7z"/><path d="M45.500 18q3.200-.8 6.400 0l-2 2v6.600h-2.400V20z"/><path d="M7.500 21q2.500-.6 5 0l-1.600 1.600v4h-1.800v-4z"/><path d="M34.500 20q2.300-.6 4.600 0l-1.400 1.500v5.100h-1.800v-5.100z"/><path d="M54 21q2.200-.5 4.400 0l-1.300 1.500v4.100h-1.800v-4.100z"/><path d="M60.500 22q1.800-.4 3.600 0l-1.100 1.200v3.400h-1.400v-3.400z"/><path d="M65.500 23.500q1.400-.3 2.800 0l-.9 1v2.100h-1v-2.100z"/><path d="M29 22.500q1.800-.4 3.600 0l-1.100 1.200v2.900h-1.400v-2.900z"/><path d="M40 22.500q1.600-.4 3.200 0l-1 1.100v3h-1.200v-3z"/><path d="M19 23q1.400-.3 2.800 0l-.9 1v2.600h-1V24z"/></g>
</svg>
<div class="lbl" style="left:178.500px;top:354.200px;letter-spacing:.27px">MarbleAlphaGho<br>stTemple.png</div>
<!-- NewfxEffectFactoryPBR.png -->
<svg style="left:300px;top:298px;overflow:hidden" width="90" height="51" viewBox="0 0 90 51">
  <defs><linearGradient id="sp1" x1="0" y1="0" x2="1" y2=".25"><stop offset="0" stop-color="#f6c81c"/><stop offset=".4" stop-color="#f2a418"/><stop offset=".75" stop-color="#e86a14"/><stop offset="1" stop-color="#d84818"/></linearGradient>
  <linearGradient id="sp2" x1="0" y1="0" x2="0" y2="1"><stop offset=".6" stop-color="#f02408" stop-opacity="0"/><stop offset=".84" stop-color="#ee1c06" stop-opacity=".97"/><stop offset="1" stop-color="#b80e02"/></linearGradient>
  <clipPath id="spc"><path d="M45 15q0-5.500 12-5.500t12 5.500q1.800 9.500 0 18.500l.8 1.300q-3 2.200-12.800 2.200t-12.800-2.200l.8-1.300q-1.800-9-0-18.500z"/></clipPath></defs>
  <rect width="90" height="51" fill="#fcebd8"/><rect width="90" height="1.500" fill="#f4f4f4"/>
  <g stroke="#f29aa6" stroke-width=".45" opacity=".95"><path d="M38.500 8.500h36.500M38.500 13h36.500M38.500 17.500h36.500M38.500 22h36.500M38.500 30.500h36.500M38.500 35h36.500M38.500 39.500h36.500M38.500 44h36.500M38.500 8.500v35.500M43 8.500v35.500M47.500 8.500v35.500M52 8.500v35.500M61 8.500v35.500M65.500 8.500v35.500M70 8.500v35.500M74.500 8.500v35.500"/></g>
  <path d="M24 26h66M56.500 4v42" stroke="#e8b8b8" stroke-width=".4"/>
  <path d="M24 2.500h16" stroke="#f0a040" stroke-width=".9" opacity=".8"/><path d="M40 2.500h11" stroke="#90a0e0" stroke-width=".9" opacity=".8"/><path d="M24 5.700h24" stroke="#e09ae8" stroke-width="1.200" opacity=".75"/>
  <g fill="#b8aca0" opacity=".8"><rect x="24.500" y="18.300" width="4.500" height="1"/><rect x="24.500" y="23" width="3.500" height="1"/><rect x="24.500" y="27.700" width="5.500" height="1"/><rect x="24.500" y="32.500" width="5" height="1"/><rect x="24.500" y="37.300" width="3" height="1"/></g>
  <g clip-path="url(#spc)"><rect x="44" y="9" width="27" height="29" fill="url(#sp1)"/>
    <g filter="url(#bl1)"><ellipse cx="50" cy="21" rx="4.500" ry="7" fill="#fbe22a"/><path d="M48 30q8-9 22-10v10q-10-2-20 6z" fill="#eafcff"/><path d="M52 24q8-6 18-5v6q-8-2-16 4z" fill="#5fd0f4" opacity=".9"/><ellipse cx="66.500" cy="23" rx="3.500" ry="5.500" fill="#2458e6"/><ellipse cx="56" cy="28.500" rx="5" ry="2.200" fill="#fff"/><path d="M50 14q8-2 16 2" stroke="#f6b040" stroke-width="2" fill="none" opacity=".8"/></g>
    <rect x="44" y="9" width="27" height="29" fill="url(#sp2)"/></g>
  <rect x="0" y="1.500" width="4" height="40" fill="#edf3ed"/><g fill="#6080a0"><rect x="1" y="3" width="1.800" height="1.500"/><rect x="1" y="33.500" width="2" height="2"/><rect x=".8" y="9.500" width="2.600" height="1.200" fill="#60a0e8"/></g>
  <rect x="4" y="4" width="19.500" height="29.500" fill="#8ee88e"/><rect x="4" y="1.500" width="19.500" height="2.500" fill="#dff0df"/>
  <rect x="11" y="6" width="6" height="18" fill="#3b9a3b"/><g fill="#2c7a2c" opacity=".7"><rect x="11.500" y="7" width="5" height="2.500"/><rect x="11.500" y="13" width="5" height="4"/><rect x="11.500" y="20" width="5" height="2"/></g>
  <rect x="17.300" y="6" width="6.200" height="18" fill="#34c434"/><g fill="#1fa01f" opacity=".8"><rect x="17.300" y="8.500" width="6.200" height="1.500"/><rect x="17.300" y="13.500" width="6.200" height="1.500"/><rect x="17.300" y="18.500" width="6.200" height="1.500"/></g>
  <rect x="5" y="6.300" width="5" height="2.700" fill="#2040f0"/><g fill="#5cc45c"><rect x="5" y="11" width="5" height="1"/><rect x="5" y="15" width="4" height="1"/><rect x="5" y="19" width="5" height="1"/><rect x="5" y="23" width="3.500" height="1"/></g>
  <rect x="12" y="28" width="9" height="1.500" fill="#d8f4d8"/><rect x="16" y="28" width="1.500" height="1.500" fill="#2060e0"/>
  <rect x="4" y="33" width="19.500" height="3.500" fill="#fbfbfb"/><rect y="36.500" width="23.500" height="14.500" fill="#006600"/><rect y="36.500" width="4" height="4.500" fill="#e4ece4"/><rect x="5" y="38" width="9" height=".8" fill="#0a8a0a"/>
</svg>
<div class="lbl" style="left:290.500px;top:354.200px;letter-spacing:.1px">NewfxEffectFacto<br>ryPBR.png</div>
<!-- PBRToyVase1.jpg -->
<svg style="left:412px;top:282px;overflow:hidden" width="90" height="67" viewBox="0 0 90 67">
  <defs><pattern id="dia" width="3" height="3" patternUnits="userSpaceOnUse" patternTransform="rotate(45)"><rect width="3" height="3" fill="#292c30"/><rect width="1.500" height="1.500" fill="#33363b"/></pattern>
  <linearGradient id="vs1" gradientUnits="userSpaceOnUse" x1="2" y1="62" x2="26" y2="40"><stop offset="0" stop-color="#5d646d" stop-opacity="0"/><stop offset=".5" stop-color="#68707a" stop-opacity=".8"/><stop offset="1" stop-color="#5d646d" stop-opacity="0"/></linearGradient>
  <linearGradient id="vs2" gradientUnits="userSpaceOnUse" x1="52" y1="30" x2="92" y2="58"><stop offset="0" stop-color="#77776f" stop-opacity="0"/><stop offset=".45" stop-color="#85857d" stop-opacity=".8"/><stop offset=".75" stop-color="#5a5b55" stop-opacity=".5"/><stop offset="1" stop-color="#3a3b38" stop-opacity="0"/></linearGradient>
  <linearGradient id="vdk" x1="0" y1="0" x2="0" y2="1"><stop offset="0" stop-color="#16181b" stop-opacity=".55"/><stop offset=".4" stop-color="#16181b" stop-opacity="0"/></linearGradient></defs>
  <rect width="90" height="67" fill="url(#dia)"/><rect width="90" height="67" fill="url(#vs1)"/><rect width="90" height="67" fill="url(#vs2)"/><rect width="90" height="67" fill="url(#vdk)"/>
  <path d="M0 30l18 37H0z" fill="#4f565f" opacity=".5"/>
  <path d="M37.500 21.300q7.300-1.300 14.600 0l-4.400 8q-1.800 3.700-1.200 8.200l1.300 9h-5.900l1.300-9q.5-4.500-1.300-8.200z" fill="#dfe4e6"/>
  <path d="M37.500 21.300q7.300-1.300 14.600 0l-4 7.400h-6.600z" fill="#e3b224"/><path d="M44.500 20.600q4-.2 7.600.7l-3.700 6.900-3 .6z" fill="#dc4a22"/><path d="M40 22.500l2.700 5M42.500 22l1.500 6" stroke="#5a9a48" stroke-width=".8"/><path d="M46 23l1 4" stroke="#6a3aa8" stroke-width=".8"/>
  <path d="M43.200 33q1.500 3 .6 7l2.500.2q-.8-4 .2-7.200z" fill="#f4f8fa"/><path d="M42 41l1-3h3.800l1 3z" fill="#c4a23a"/>
  <path d="M41 46.500h8v2.300h1.300v4l-1.800 1.800h-7l-1.800-1.800v-4H41z" fill="#c99b2c"/><path d="M41.500 49h7v1.200h-7z" fill="#8e6a1c"/>
</svg>
<div class="lbl" style="left:402.500px;top:354.200px;letter-spacing:-.27px">PBRToyVase1.jpg</div>
<!-- RotoDrawScreenShot.dds -->
<svg style="left:522px;top:260px" width="96" height="90" viewBox="0 0 96 90"><use href="#ddsico"/></svg>
<div class="lbl" style="left:514.500px;top:354.200px">RotoDrawScreen<br>Shot.dds</div>
<!-- RotoDrawScreenShot.jpg -->
<svg style="left:636px;top:264px;overflow:hidden" width="90" height="85" viewBox="0 0 90 85">
  <defs><radialGradient id="rb1" cx=".28" cy=".5" r=".8"><stop offset="0" stop-color="#ffd61a"/><stop offset=".45" stop-color="#ecbc1e"/><stop offset=".8" stop-color="#a58a22"/><stop offset="1" stop-color="#54541a"/></radialGradient>
  <linearGradient id="rb1b" x1="0" y1="0" x2="0" y2="1"><stop offset=".55" stop-color="#f07a10" stop-opacity="0"/><stop offset="1" stop-color="#f4780c" stop-opacity=".95"/></linearGradient>
  <radialGradient id="rb2" cx=".38" cy=".42" r=".7"><stop offset="0" stop-color="#ff7412"/><stop offset=".55" stop-color="#ea4210"/><stop offset="1" stop-color="#82200a"/></radialGradient></defs>
  <rect width="90" height="85" fill="#000"/>
  <path d="M1.500 2.200h47" stroke="#d85a10" stroke-width="1.100" opacity=".85"/><path d="M1.500 4.200h51" stroke="#6a8a5a" stroke-width=".8" opacity=".7"/><path d="M1.500 6.800h48M1.500 9.900h48" stroke="#6a2cb8" stroke-width="1.300" opacity=".9"/>
  <g stroke="#8d1245" stroke-width=".6"><path d="M13.500 11.700h62M13.500 17.800h62M13.500 23.900h62M13.500 30h62M13.500 36.100h62M13.500 48.300h62M13.500 54.400h62M13.500 60.500h62M13.500 66.600h62M13.500 72.500h62M13.500 11.700v60.800M19.700 11.700v60.800M25.900 11.700v60.800M32 11.700v60.800M38.200 11.700v60.800M50.500 11.700v60.800M56.700 11.700v60.800M62.900 11.700v60.800M69 11.700v60.800M75.300 11.700v60.800"/></g>
  <path d="M13.500 42.200h62" stroke="#54540e" stroke-width=".8"/><path d="M44.400 18v54.500" stroke="#6a1040" stroke-width=".6"/><path d="M44.400 11.700v7" stroke="#16c416" stroke-width=".8"/>
  <g fill="#b4b4b4" opacity=".6"><rect x="1.500" y="33.500" width="8" height=".9"/><rect x="1.500" y="35.600" width="17" height=".9"/><rect x="1.500" y="43.500" width="10" height=".9"/><rect x="1.500" y="52.800" width="13" height=".9"/><rect x="1.500" y="62.300" width="11" height=".9"/><rect x="1.500" y="71.800" width="8" height=".9"/></g>
  <path d="M26.500 24q1.500-5.600 18-5.600t18 5.600q1.200 8-4 13.500t-14 9q-9-3.500-14-9t-4-13.500z" fill="url(#rb1)"/><path d="M26.500 24q1.500-5.600 18-5.600t18 5.600q1.200 8-4 13.500t-14 9q-9-3.500-14-9t-4-13.500z" fill="url(#rb1b)"/>
  <path d="M44.500 46.400q10 3.500 13.500 10.500t-.5 12q-5 3-13 3t-13-3q-3.500-5.500 0-12.500t13-10z" fill="url(#rb2)"/>
</svg>
<div class="lbl" style="left:626.500px;top:354.200px">RotoDrawScreen<br>Shot.jpg</div>
<!-- RotoDrawScreenShot1.dds -->
<svg style="left:746px;top:260px" width="96" height="90" viewBox="0 0 96 90"><use href="#ddsico"/></svg>
<div class="lbl" style="left:738.500px;top:354.200px">RotoDrawScreen<br>Shot1.dds</div>
<!-- scanner.dds -->
<svg style="left:860px;top:259px;overflow:hidden" width="90" height="90" viewBox="0 0 90 90">
  <defs><filter id="nz" x="0" y="0" width="1" height="1"><feTurbulence type="fractalNoise" baseFrequency=".22 .5" numOctaves="3" seed="11"/><feColorMatrix type="matrix" values="0 0 0 0 0  0 0 0 0 0  0 0 0 0 0  2.600 2.200 0 0 -2.050"/><feComposite in2="SourceGraphic" operator="in"/></filter>
  <filter id="nzw" x="0" y="0" width="1" height="1"><feTurbulence type="fractalNoise" baseFrequency=".25 .55" numOctaves="2" seed="29"/><feColorMatrix type="matrix" values="0 0 0 0 1  0 0 0 0 1  0 0 0 0 1  2.400 2 0 0 -2.350"/><feComposite in2="SourceGraphic" operator="in"/></filter>
  <linearGradient id="scf" x1="1" y1="0" x2=".35" y2=".6"><stop offset="0" stop-color="#a9a9b0" stop-opacity=".95"/><stop offset=".5" stop-color="#a4a4aa" stop-opacity=".7"/><stop offset="1" stop-color="#a0a0a4" stop-opacity="0"/></linearGradient></defs>
  <rect width="90" height="90" fill="#9c9c9f"/>
  <rect width="90" height="90" fill="#161616" filter="url(#nz)" opacity=".82"/><rect width="90" height="90" fill="#fff" filter="url(#nzw)" opacity=".55"/>
  <rect width="90" height="90" fill="url(#scf)"/>
  <g stroke="#8c8c92" stroke-width=".5" opacity=".6"><path d="M40 0v14M44 0v16M48 0v18M52 0v19M56 0v18M60 0v16M64 0v13M68 0v10"/></g>
  <g fill="#0b0b0b"><circle cx="21.500" cy="37.500" r="3.200"/><circle cx="4" cy="37" r="2.600"/><circle cx="4" cy="37" r="1" fill="#8a8a8a"/><rect x="30" y="56" width="8.500" height="4.800" rx=".8"/><rect x="36" y="44.500" width="9" height="2.600"/><circle cx="12" cy="29.500" r="1.700"/><rect x="1" y="8" width="6" height="3" rx="1"/><rect x="10" y="14" width="8" height="1.600"/><rect x="53" y="62" width="2" height="2"/><circle cx="72" cy="70" r="1.600" fill="none" stroke="#0b0b0b" stroke-width=".8"/></g>
  <g fill="#e8e8ea" opacity=".85"><rect x="42" y="26" width="5" height="2"/><rect x="50" y="29" width="6" height="2"/><rect x="27" y="16" width="4" height="1.600"/><rect x="62" y="54" width="4" height="1.600"/></g>
  <g fill="#d09a56" opacity=".9"><rect x="1" y="60" width="7" height="2.200"/><rect x="1" y="56.500" width="12" height="1.400"/><rect x="10" y="5" width="4" height="1.500"/><rect x="33" y="32" width="4" height="1.300"/><rect x="38" y="23" width="3" height="1.200"/><rect x="3" y="44" width="2.500" height="3"/><rect x="22" y="84" width="5" height="1.300"/><rect x="34" y="52" width="4" height="1.200"/><rect x="60" y="73" width="3" height="1.200"/></g>
  <path d="M2 65.500q7-5 11.500-.5 0 1.500-1 2-5 5-10.500 1.500z" fill="none" stroke="#1a1a1a" stroke-width="1.500"/><path d="M36 42q3-3 6.500-1" fill="none" stroke="#1a1a1a" stroke-width="1"/>
</svg>
<div class="lbl" style="left:850.500px;top:354.200px">scanner.dds</div>
<!-- Wide310x150Logo.scale-200.png -->
<svg style="left:1001px;top:317px" width="32" height="32" viewBox="0 0 32 32"><use href="#hot3d"/></svg>
<div class="lbl" style="left:962.500px;top:354.200px">Wide310x150Log<br>o.scale-200.png</div>
<!-- selected item: wine glass -->
<svg style="left:1084px;top:282px;overflow:hidden" width="90" height="67" viewBox="0 0 90 67">
  <defs><linearGradient id="wg" x1="0" y1="0" x2="0" y2="1"><stop offset="0" stop-color="#e4eae8"/><stop offset=".14" stop-color="#b5bfc1"/><stop offset=".42" stop-color="#929ca0"/><stop offset=".47" stop-color="#a8b2b2"/><stop offset=".51" stop-color="#3f4749"/><stop offset=".6" stop-color="#555c5c"/><stop offset=".78" stop-color="#60665f"/><stop offset="1" stop-color="#2a302f"/></linearGradient>
  <linearGradient id="wl" x1="0" y1="0" x2="1" y2="0"><stop offset="0" stop-color="#243846" stop-opacity=".8"/><stop offset=".18" stop-color="#4f6874" stop-opacity=".35"/><stop offset=".5" stop-color="#fff" stop-opacity="0"/><stop offset="1" stop-color="#c8c4b4" stop-opacity=".25"/></linearGradient>
  <linearGradient id="bowl" x1="0" y1="0" x2="1" y2=".15"><stop offset="0" stop-color="#3b3b38"/><stop offset=".3" stop-color="#262625"/><stop offset=".52" stop-color="#57544a"/><stop offset=".74" stop-color="#25252c"/><stop offset=".88" stop-color="#14189a"/><stop offset=".96" stop-color="#1a22d8"/><stop offset="1" stop-color="#10186c"/></linearGradient></defs>
  <rect width="90" height="67" fill="url(#wg)"/><rect width="90" height="67" fill="url(#wl)"/>
  <g filter="url(#bl1)"><path d="M26 0h40l-4 9H32z" fill="#f6f8f4" opacity=".75"/><path d="M59 14l4.500-8 3 2 3.500 7z" fill="#77848a" opacity=".8"/>
  <path d="M0 48l26-10 14 8-18 21H0z" fill="#14181a" opacity=".75"/><path d="M0 44l90-6v3L0 48z" fill="#8a9494" opacity=".5"/><path d="M52 44l38-4v14l-34 6z" fill="#8a8c80" opacity=".55"/></g>
  <path d="M22.700 16q.5-5 11-6.200t22 .2q10.500 1.700 10.700 6.500.3 8.500-5.400 14.500t-14 7.800q-10-1.800-16.800-8T22.700 16z" fill="url(#bowl)"/>
  <path d="M30 13l22 20" stroke="#77725f" stroke-width="3" opacity=".35" filter="url(#bl1)"/>
  <path d="M40 37.500q6 .8 8 .5-1.500 3-1 5.500l6 3.500q-1 3.500-8 3.500t-8.500-3l4.500-4q0-3-1-6z" fill="#3e3d36"/><path d="M39.500 36.500q3.500 1.300 6.500 1.200-.8 2.800-.6 4.800l-3.400-.5q-.5-3-2.500-5.500z" fill="#cdb777"/>
</svg>
<div class="lbl" style="left:1074.500px;top:354.200px;color:#e8e8e8">WineGlassOnTabl<br>e_001.jpg</div>
<!-- tooltip -->
<div class="a" style="left:1104px;top:332px;width:140px;height:50px;background:#2b2b2b;border:1px solid #767676;box-shadow:2px 2px 4px rgba(0,0,0,.5)"></div>
<div class="t" style="left:1110px;top:334.300px;font-size:11.45px;line-height:15px;white-space:normal;width:134px;letter-spacing:-.05px">Item type: JPG File<br>Dimensions: 1420 x 1048<br><span style="letter-spacing:-.38px">Size: 260 KB</span></div>



<!-- ================= TASKBAR ================= -->
<div class="a" id="taskbar"></div>
<!-- start button -->
<svg style="left:959px;top:1565px" width="23" height="23" viewBox="0 0 23 23">
  <defs><linearGradient id="wlg" x1="0" y1="0" x2="1" y2="1"><stop offset="0" stop-color="#7fe4ff"/><stop offset=".5" stop-color="#3fc0fa"/><stop offset="1" stop-color="#1a98f0"/></linearGradient></defs>
  <path d="M0 0h11v11H0zM12 0h11v11H12zM0 12h11v11H0zM12 12h11v11H12z" fill="url(#wlg)"/>
</svg>
<!-- search pill -->
<div class="a" style="left:995px;top:1560px;width:220px;height:32px;border-radius:16px;background:rgba(255,255,255,.135);box-shadow:inset 0 0 0 1px rgba(255,255,255,.06)"></div>
<svg style="left:1006px;top:1568px" width="16" height="16" viewBox="0 0 16 16" fill="none" stroke="#eef0f6" stroke-width="1.500" stroke-linecap="round"><circle cx="6.500" cy="6.500" r="5.300"/><path d="M10.500 10.500L15 15"/></svg>
<div class="t" style="left:1031.500px;top:1567px;font-size:13.4px;line-height:18px;color:#e6e8ee">Search</div>
<svg style="left:1163px;top:1564px" width="46" height="26" viewBox="0 0 46 26">
  <defs><radialGradient id="pl" cx=".35" cy=".35" r=".8"><stop offset="0" stop-color="#4fb4ff"/><stop offset=".6" stop-color="#1a78e4"/><stop offset="1" stop-color="#0c50b8"/></radialGradient></defs>
  <circle cx="15" cy="12" r="9" fill="url(#pl)"/><path d="M8 8q7-3 14 1M7 13q8-4 16 0M9 18q6-3 12 0" fill="none" stroke="#8ad0ff" stroke-width="1" opacity=".7"/>
  <g fill="#ffd23a"><path d="M4 3l.8 1.600 1.700.300-1.200 1.200.3 1.700L4 7l-1.600.8.300-1.700L1.500 4.900l1.700-.3z"/><path d="M28 2l.6 1.300 1.400.2-1 1 .2 1.400-1.200-.7-1.200.7.200-1.400-1-1 1.400-.2z"/><circle cx="36" cy="8" r="1"/><circle cx="2" cy="10" r=".9"/><circle cx="25" cy="15" r="1"/></g>
  <path d="M29 12l11 3.500-1.200 3.300L28 15z" fill="#a9a4e8"/><path d="M27.500 11.500l2 .7-1.200 3.300-2-.7z" fill="#5a58b8"/><path d="M39 15l3 1-1.300 3.800-3-1z" fill="#d8d4ff"/><path d="M34 17.500l-3.500 8M34 17.500l3.500 8M34 17.500v8" stroke="#8b78d0" stroke-width="1.100" fill="none"/>
</svg>
<!-- task view -->
<svg style="left:1227px;top:1564px" width="26" height="24" viewBox="0 0 26 24"><rect x="0" y="7.500" width="18" height="15" rx="2" fill="#707070"/><rect x="7" y="1" width="18" height="15" rx="2" fill="#f4f4f4"/><path d="M7 7.500h11v8.500H9a2 2 0 0 1-2-2z" fill="#c4c4c4"/></svg>
<!-- copilot -->
<svg style="left:1270px;top:1563px" width="26" height="26" viewBox="0 0 26 26">
  <defs><linearGradient id="cp1" x1=".6" y1="0" x2=".2" y2="1"><stop offset="0" stop-color="#2a7af0"/><stop offset=".3" stop-color="#26b4d8"/><stop offset=".55" stop-color="#3cc88a"/><stop offset=".8" stop-color="#c8d040"/><stop offset="1" stop-color="#f4b030"/></linearGradient><linearGradient id="cp2" x1=".7" y1="0" x2=".3" y2="1"><stop offset="0" stop-color="#5a6cf4"/><stop offset=".4" stop-color="#b060ec"/><stop offset=".7" stop-color="#ee5c9c"/><stop offset="1" stop-color="#f47840"/></linearGradient></defs>
  <path d="M16.500 23.500h-6q-2.500 0-3.200-2.400l-.8-2.600h4q2.600 0 3.400-2.600l2.600-9q.8-2.600 3.400-2.600h2.600q3 0 2.200 3l-3 10.500q-1.200 4-5.200 4.300z" fill="url(#cp2)"/>
  <path d="M9.500 2.500h6q2.500 0 3.200 2.400l.8 2.600h-4q-2.600 0-3.400 2.600l-2.600 9q-.8 2.600-3.400 2.600H3.500q-3 0-2.200-3l3-10.500q1.200-4 5.200-4.300z" fill="url(#cp1)"/>
  <path d="M12.100 10.100q.8-2.600 3.400-2.600h4l-1 3.200-1.600 5.200q-.8 2.600-3.400 2.600h-4l1-3.200z" fill="#141a2c" opacity=".62"/>
</svg>
<!-- explorer -->
<svg style="left:1314px;top:1564px" width="26" height="24" viewBox="0 0 26 24"><path d="M1 3a2 2 0 0 1 2-2h6l2.500 3H23a2 2 0 0 1 2 2v15a2 2 0 0 1-2 2H3a2 2 0 0 1-2-2z" fill="#e8a412"/><path d="M1 8h24v13a2 2 0 0 1-2 2H3a2 2 0 0 1-2-2z" fill="#ffd251"/><path d="M6 17a2 2 0 0 1 2-2h10a2 2 0 0 1 2 2v6H6z" fill="#1a74d8"/><rect x="9.500" y="17.500" width="7" height="1.800" rx=".9" fill="#58a8f4"/></svg>
<!-- edge -->
<svg style="left:1358px;top:1563px" width="26" height="26" viewBox="0 0 26 26">
  <defs><linearGradient id="eg1" x1="0" y1="0" x2="1" y2="0"><stop offset="0" stop-color="#2a9ae8"/><stop offset=".6" stop-color="#34c4c0"/><stop offset="1" stop-color="#74d84a"/></linearGradient><linearGradient id="eg2" x1="0" y1="0" x2="0" y2="1"><stop offset="0" stop-color="#1a7ad8"/><stop offset="1" stop-color="#0a4aa0"/></linearGradient></defs>
  <circle cx="13" cy="13" r="12.500" fill="url(#eg2)"/>
  <path d="M.8 11.500A12.500 12.500 0 0 1 25.500 12q.3 5-5 5.500h-5q-1.500-.5-.5-2.500 1-2-.5-4t-5-2q-6 0-8.700 2.500z" fill="url(#eg1)"/>
  <path d="M9 9q-4.500 3.500-3 9.500t8.500 7q4 0 7.500-3-5 2-8.500-1t-2.500-7q.8-2.500 0-4.500z" fill="#0d58b0"/>
  <path d="M14.800 15q-.8 2 .7 2.500h5q3.500-.3 4.600-3-1 7-6.600 9.800-5-.5-6.500-4.300t2.800-5z" fill="#12213c" opacity=".45"/>
</svg>
<div class="a" style="left:1367px;top:1591px;width:7px;height:3px;border-radius:2px;background:#8c9098"></div>
<!-- store -->
<svg style="left:1403px;top:1563px" width="25" height="26" viewBox="0 0 25 26"><path d="M7.500 8V4.500a2 2 0 0 1 2-2h6a2 2 0 0 1 2 2V8" fill="none" stroke="#3aa8f0" stroke-width="2"/><path d="M.5 7.500h24V22a3 3 0 0 1-3 3h-18a3 3 0 0 1-3-3z" fill="#f4f4f6"/><rect x="7.500" y="11" width="4.500" height="4.500" fill="#f25022"/><rect x="13" y="11" width="4.500" height="4.500" fill="#7fba00"/><rect x="7.500" y="16.500" width="4.500" height="4.500" fill="#00a4ef"/><rect x="13" y="16.500" width="4.500" height="4.500" fill="#ffb900"/></svg>
<div class="a" style="left:1411px;top:1591px;width:7px;height:3px;border-radius:2px;background:#8c9098"></div>
<!-- outlook -->
<svg style="left:1446px;top:1563px" width="26" height="26" viewBox="0 0 26 26"><path d="M8 7l10-6 8 6v13a3 3 0 0 1-3 3H11a3 3 0 0 1-3-3z" fill="#1490df"/><path d="M13 6l10-3 3 4v5L13 17z" fill="#35b8f1"/><path d="M8 12l18 3v5a3 3 0 0 1-3 3H11a3 3 0 0 1-3-3z" fill="#28a8ea"/><path d="M14 24l12-10v6a4 4 0 0 1-4 4z" fill="#50d9ff" opacity=".8"/><rect x="0" y="6.500" width="14" height="14" rx="2" fill="#0f6cbd"/><ellipse cx="7" cy="13.500" rx="3.400" ry="3.900" fill="none" stroke="#fff" stroke-width="1.900"/></svg>
<!-- L app -->
<div class="a" style="left:1491px;top:1564px;width:24px;height:24px;background:#1e3caa"></div>
<div class="t" style="left:1491px;top:1564px;width:24px;text-align:center;font-size:19px;line-height:24px;font-weight:bold;color:#fff;text-shadow:-1px 1px 0 #101838">L</div>
<!-- shield -->
<svg style="left:1536px;top:1563px" width="23" height="26" viewBox="0 0 23 26"><path d="M11.500 .5q5 3 11 3.500 0 9-2.500 14t-8.500 7.500q-6-2.500-8.500-7.500T.5 4q6-.5 11-3.500z" fill="#e23844"/><path d="M11.500 .5q5 3 11 3.500 0 9-2.500 14t-8.500 7.500z" fill="#c42836"/><circle cx="11.500" cy="10.500" r="3" fill="#3a1018"/><path d="M10 12h3l1 6h-5z" fill="#3a1018"/></svg>
<div class="a" style="left:1543px;top:1591px;width:7px;height:3px;border-radius:2px;background:#8c9098"></div>
<!-- active app -->
<div class="a" style="left:1571px;top:1556px;width:40px;height:40px;border-radius:5px;background:rgba(140,160,220,.13);box-shadow:inset 0 0 0 1px rgba(255,255,255,.05)"></div>
<svg style="left:1579px;top:1564px" width="24" height="24" viewBox="0 0 32 32"><use href="#hot3d"/></svg>
<div class="a" style="left:1583px;top:1591px;width:16px;height:3px;border-radius:2px;background:#4cc2ff"></div>
<!-- tray -->
<svg style="left:2343px;top:1572px" width="12" height="8" viewBox="0 0 12 8" fill="none" stroke="#f4f4f4" stroke-width="1.400"><path d="M1 7l5-5.500L11 7"/></svg>
<svg style="left:2372px;top:1568px" width="18" height="16" viewBox="0 0 18 16"><path d="M4 13a3.200 3.200 0 0 1-.5-6.300 4.600 4.600 0 0 1 8.500-1.700 3.800 3.800 0 0 1 5 3.800 2.300 2.300 0 0 1-.8 4.200z" fill="#8a8e96"/><path d="M3 1l12 14" stroke="#d8d8d8" stroke-width="1.300"/></svg>
<svg style="left:2404px;top:1566px" width="19" height="18" viewBox="0 0 19 18"><g fill="none" stroke="#f0f0f0" stroke-width="1.400" stroke-linecap="round"><path d="M3.500 8.500q6-6 13.500 0"/><path d="M5.500 11q4.500-4.500 9 0"/><path d="M7.700 13.500q2.500-2.500 5 0"/></g><circle cx="10.200" cy="15.500" r="1.200" fill="#f0f0f0"/><path d="M4 1q2 1.500 3.700 1.500 0 5-3.700 7Q.3 7.500.3 2.500 2 2.500 4 1z" fill="#3ab0f0"/><path d="M4 3.500v3.500M3 4.500l1-1 1 1" stroke="#0c2c48" stroke-width=".9" fill="none"/></svg>
<svg style="left:2428px;top:1568px" width="18" height="16" viewBox="0 0 18 16"><path d="M1 5.500h3l4-3.500v12l-4-3.500H1z" fill="none" stroke="#f0f0f0" stroke-width="1.200" stroke-linejoin="round"/><path d="M10.500 5.500q1.500 2.500 0 5" fill="none" stroke="#d0d0d0" stroke-width="1.100"/><path d="M13 3.500q2.500 4.500 0 9" fill="none" stroke="#8a8a8a" stroke-width="1"/><path d="M15.500 1.500q3.500 6.500 0 13" fill="none" stroke="#606468" stroke-width="1"/></svg>
<svg style="left:2452px;top:1567px" width="18" height="18" viewBox="0 0 18 18"><rect x="1.500" y="4.500" width="13" height="8.500" rx="1.500" fill="none" stroke="#f4f4f4" stroke-width="1.400"/><path d="M15.500 7v3.500" stroke="#f4f4f4" stroke-width="1.600"/><path d="M3 12l4-6h7v6z" fill="#f4f4f4"/><path d="M3.500 1.500L1.800 5h2.400" stroke="#f4f4f4" stroke-width="1" fill="none"/><path d="M13.500 17l-3.300-3.200a1.900 1.900 0 0 1 2.700-2.700l.6.600.6-.6a1.900 1.900 0 0 1 2.700 2.700z" fill="#fff" stroke="#1c2029" stroke-width=".8"/></svg>
<div class="t" style="left:2441px;top:1560px;width:100px;text-align:right;font-size:11.8px;line-height:16px;color:#f4f4f4">11:44 AM</div>
<div class="t" style="left:2441px;top:1576px;width:100px;text-align:right;font-size:11.8px;line-height:16px;color:#f4f4f4">9/23/2025</div>


<svg width="0" height="0" style="left:-10px;top:-10px">
  <defs>
        <linearGradient id="ffg" x1="0" y1="0" x2="1" y2="1"><stop offset="0" stop-color="#ffe79e"/><stop offset=".5" stop-color="#ffdb72"/><stop offset="1" stop-color="#fccb45"/></linearGradient>
    <linearGradient id="fbg" x1="0" y1="0" x2="0" y2="1"><stop offset="0" stop-color="#fbbd1e"/><stop offset="1" stop-color="#eea90a"/></linearGradient>
    <filter id="bl1" x="-.1" y="-.1" width="1.200" height="1.200"><feGaussianBlur stdDeviation=".9"/></filter>
    <g id="fback"><path d="M0 5a5 5 0 0 1 5-5h23.500q2.500 0 4 1.800l4 4.800q1.500 1.800 4 1.800H79a5 5 0 0 1 5 5V61a5 5 0 0 1-5 5H5a5 5 0 0 1-5-5z" fill="url(#fbg)"/></g>
    <g id="fpaper"><rect x="3" y="12.500" width="78" height="30" rx="2" fill="#fbe3a2"/><path d="M44 12.500h35a2 2 0 0 1 2 2v26H20z" fill="#f7d98a" opacity=".6"/></g>
    <g id="fdocpic"><path d="M27.500 16h22.500l8 8V42H27.500z" fill="#fcfcfd" stroke="#d4d4d6" stroke-width=".8"/><path d="M50 16v8h8z" fill="#e2e4e8" stroke="#d4d4d6" stroke-width=".6"/><rect x="33" y="28" width="20.500" height="14" rx="2.200" fill="#1a6cd6"/><path d="M33 30.200a2.200 2.200 0 0 1 2.200-2.200h16.100a2.200 2.200 0 0 1 2.200 2.200V33H33z" fill="#2a84e8"/><circle cx="47.500" cy="32.300" r="1.700" fill="#e8f1ff"/></g>
    <g id="ffront"><path d="M0 44a4 4 0 0 1 4-4h23.500q2.500 0 4.500-1.400l3.200-2.300q2-1.300 4.500-1.300H80a4 4 0 0 1 4 4V62a4 4 0 0 1-4 4H4a4 4 0 0 1-4-4z" fill="url(#ffg)"/></g>
    <g id="ddsico"><rect width="96" height="90" fill="#f6f6f8"/><rect x="6" y="6" width="84" height="78" fill="#444"/><rect x="12" y="12" width="72.300" height="66.300" fill="#f1f1f3"/><circle cx="57" cy="27" r="9" fill="#444"/><path d="M12 48L30.400 29.600 54.600 52.800 72 41.200 84.300 50.700V64.400L72 51.400 54.600 64.400 30.400 41.200 12 63z" fill="#444"/></g>
    <g id="i-pin"><path d="M7.200 .8l4 4-1.200.5-2.300 2.300-.3 2.700-2.500-2.500L1.200 11.500l-.7.100.1-.8L4.300 7.100 1.800 4.600l2.700-.3L6.800 2z" fill="#8f949c"/></g>
    <g id="i-gallery"><rect x="2.500" y="2.500" width="13" height="13" rx="2" fill="#1565b8"/><rect x=".5" y=".5" width="13" height="13" rx="2" fill="#2b9af3"/><path d="M.5 12l4.500-5 3.200 3.200 1.800-1.400L13.500 11.500v.5a1.500 1.500 0 0 1-1.500 1.500H2a1.500 1.500 0 0 1-1.500-1.500z" fill="#fff"/><circle cx="10" cy="4" r="1.200" fill="#fff"/></g>
    <g id="i-onedrive"><path d="M3.500 12.500a3 3 0 0 1-.3-6 4 4 0 0 1 7.300-1.200 3.300 3.300 0 0 1 4.700 3 2.300 2.300 0 0 1-.7 4.200z" fill="#1689e0"/><path d="M6 12.500h8.500a2.300 2.300 0 0 0 .7-4.200 3 3 0 0 0-2-.3L8 10.500z" fill="#3cb4f5"/><path d="M3.500 12.500a3 3 0 0 1-.3-6l6.800 4.500-2 1.500z" fill="#0f6cc4"/></g>
    <g id="i-desktop"><rect x="0" y="2.500" width="16" height="11" rx="1.500" fill="#29a8e8"/><path d="M0 4a1.500 1.500 0 0 1 1.500-1.500h13A1.500 1.500 0 0 1 16 4v3L0 11z" fill="#43c6f5"/><rect x="1.500" y="4.300" width="2" height="1.600" fill="#fff"/><rect x="1.500" y="7" width="2" height="1.600" fill="#fff"/><rect x="11" y="12" width="1.300" height="1.300" fill="#e8f4ff"/><rect x="13" y="12" width="1.300" height="1.300" fill="#e8f4ff"/></g>
    <g id="i-downloads"><path d="M8 1v9.500M3.800 6.500L8 10.700l4.200-4.200" fill="none" stroke="#2fc48c" stroke-width="1.500"/><path d="M2.500 14.200h11" stroke="#1fae7a" stroke-width="1.600"/></g>
    <g id="i-documents"><rect x="2.500" y=".5" width="11.500" height="15" rx="1.500" fill="#8d9db6"/><rect x="3.500" y=".5" width="10.500" height="14" rx="1.200" fill="#a9b8ce"/><rect x="5" y="4" width="3.500" height="2.500" fill="#fff"/><path d="M9.500 4.500h3M9.500 6.200h3M5 8.500h7.500M5 10.500h7.500" stroke="#fff" stroke-width="1"/></g>
    <g id="i-pictures"><rect x="1" y="1" width="14" height="14" rx="2" fill="#1b8fe8"/><path d="M1 13l5-5.500 3.500 3.500 2-1.500L15 12.500v.5a2 2 0 0 1-2 2H3a2 2 0 0 1-2-2z" fill="#fff"/><circle cx="11.300" cy="4.700" r="1.300" fill="#fff"/></g>
    <g id="i-music"><circle cx="8" cy="8" r="8" fill="#e06a5a"/><path d="M0 8a8 8 0 0 1 8-8v16a8 8 0 0 1-8-8z" fill="#d4587a" opacity=".5"/><path d="M7.300 11V4l3.700 1v1.800L8.500 6.200V11" fill="none" stroke="#fff" stroke-width="1.100"/><ellipse cx="6.800" cy="11.200" rx="1.700" ry="1.400" fill="#fff"/></g>
    <g id="i-videos"><rect x="1" y="1.500" width="14" height="13" rx="2" fill="#9a42d8"/><rect x="1" y="1.500" width="3" height="13" fill="#7a2fb8"/><rect x="12" y="1.500" width="3" height="13" fill="#7a2fb8"/><g fill="#e4c8f8"><rect x="1.800" y="3" width="1.400" height="1.600"/><rect x="1.800" y="6" width="1.400" height="1.600"/><rect x="1.800" y="9" width="1.400" height="1.600"/><rect x="1.800" y="12" width="1.400" height="1.600"/><rect x="12.800" y="3" width="1.400" height="1.600"/><rect x="12.800" y="6" width="1.400" height="1.600"/><rect x="12.800" y="9" width="1.400" height="1.600"/><rect x="12.800" y="12" width="1.400" height="1.600"/></g><path d="M6 5l5 3-5 3z" fill="#fff"/></g>
    <g id="i-sfolder"><path d="M0 3.500a1.500 1.500 0 0 1 1.500-1.500h4l1.800 1.800H14.500A1.500 1.500 0 0 1 16 5.300V13a1.500 1.500 0 0 1-1.500 1.500h-13A1.500 1.500 0 0 1 0 13z" fill="#f0b010"/><path d="M0 7l6.500 0 1.500-1.500H14.500A1.500 1.500 0 0 1 16 7v6a1.500 1.500 0 0 1-1.500 1.500h-13A1.500 1.500 0 0 1 0 13z" fill="#ffd75a"/></g>
    <g id="i-thispc"><rect x=".5" y="1.500" width="15" height="10" rx="1" fill="#25b4e8"/><path d="M.5 2.500a1 1 0 0 1 1-1h13a1 1 0 0 1 1 1v2L.5 9z" fill="#3fd0f0"/><rect x="7" y="11.500" width="2" height="2.500" fill="#a0a8b0"/><rect x="4.500" y="13.700" width="7" height="1.300" fill="#c0c8d0"/></g>
    <g id="i-drivec"><g fill="#1c8ae8"><rect x="0" y="0" width="3" height="3"/><rect x="3.800" y="0" width="3" height="3"/><rect x="0" y="3.800" width="3" height="3"/><rect x="3.800" y="3.800" width="3" height="3"/></g><path d="M1 12l2-4h10l2 4z" fill="#d8dde4"/><rect x="1" y="10.500" width="14" height="4" rx=".8" fill="#9aa4b0"/><rect x="2.500" y="12" width="1.500" height="1.200" fill="#3ce060"/><path d="M10.500 7V4a2 2 0 0 1 4 0" fill="none" stroke="#c8ced6" stroke-width="1.200"/><rect x="9" y="6" width="6.500" height="6" rx="1" fill="#b4bcc8"/></g>
    <g id="i-drived"><path d="M1 12l2-4h10l2 4z" fill="#d8dde4"/><rect x="1" y="10.500" width="14" height="4" rx=".8" fill="#9aa4b0"/><rect x="2.500" y="12" width="1.500" height="1.200" fill="#3ce060"/><path d="M10.500 7V4a2 2 0 0 1 4 0" fill="none" stroke="#c8ced6" stroke-width="1.200"/><rect x="9" y="6" width="6.500" height="6" rx="1" fill="#b4bcc8"/></g>
    <g id="i-network"><rect x="3" y="4" width="13" height="8.500" rx="1" fill="#25b4e8"/><rect x="8.500" y="12.500" width="2" height="2" fill="#a0a8b0"/><rect x="6" y="14.300" width="7" height="1.200" fill="#c0c8d0"/><circle cx="4.500" cy="4.500" r="4.300" fill="#4aa8e8"/><path d="M1.500 2.500q2 1.500 3 0t2.500.5M1 6q2-1 3.500.5T7.500 7" fill="none" stroke="#d8f0ff" stroke-width="1"/></g>
    <g id="picico"><rect width="14" height="14" rx="2" fill="#1b8fe8"/><path d="M0 12l5-5.500 3.500 3.500 2-1.500L14 11.500V12a2 2 0 0 1-2 2H2a2 2 0 0 1-2-2z" fill="#fff"/><circle cx="10.300" cy="3.700" r="1.300" fill="#fff"/></g>
    <g id="hot3d">
      <rect width="32" height="32" fill="#00008b"/>
      <path d="M0 0h6.500L17 13.500 25 0h6.500L20.500 16.500 29.500 27l-1.500 5h-5.500L16.500 23 7 32H0v-1.500L12 18 0 1.500z" fill="#fe0000"/>
      <g fill="#ffee00"><rect x="13" y="1" width="1.400" height="1.400"/><rect x="16" y="2" width="1.400" height="1.400"/><rect x="25" y="0" width="1.400" height="1.400"/><rect x="1" y="5.500" width="1.300" height="1.300"/><rect x="3" y="12" width="1.400" height="1.400"/><rect x="5" y="15" width="1.400" height="1.400"/><rect x="20" y="13" width="1.400" height="1.400"/><rect x="2" y="19" width="1.400" height="1.400"/><rect x="27" y="14" width="1.400" height="1.400"/><rect x="29" y="16" width="1.400" height="1.400"/><rect x="27" y="18" width="1.400" height="1.400"/><rect x="16" y="27" width="1.400" height="1.400"/><rect x="12" y="30" width="1.400" height="1.400"/><rect x="19" y="30" width="1.400" height="1.400"/><rect x="22" y="29" width="1.400" height="1.400"/></g>
      <g fill="none" stroke="#000" stroke-width="2.400" transform="translate(.7 .7)" opacity=".85"><path d="M5.800 7.300l6 8.700M10.500 4.500l5 8M8.500 11.700l4.700-3.200"/><rect x="16.200" y="6" width="4.600" height="6.300" rx="1"/><path d="M22.300 12l2.700-8.500 5 7.500"/><path d="M9.500 18.300q5.200-2.500 5.700.5 0 2-3.200 2.600 4.200 0 3.700 2.700-1 3.100-7.400 1"/><path d="M18.600 17.800h5.200q2.600 3.700 0 7.400h-5.200zM20.300 17.800v7.400"/></g>
      <g fill="none" stroke="#00fe00" stroke-width="1.900"><path d="M5.800 7.300l6 8.700M10.500 4.500l5 8M8.500 11.700l4.700-3.200"/><rect x="16.200" y="6" width="4.600" height="6.300" rx="1"/><path d="M22.300 12l2.700-8.500 5 7.500"/><path d="M9.500 18.300q5.200-2.500 5.700.5 0 2-3.200 2.600 4.200 0 3.700 2.700-1 3.100-7.400 1"/><path d="M18.600 17.800h5.200q2.600 3.700 0 7.400h-5.200zM20.300 17.800v7.400"/></g>
    </g>
  </defs>
</svg>
</body>
</html>
